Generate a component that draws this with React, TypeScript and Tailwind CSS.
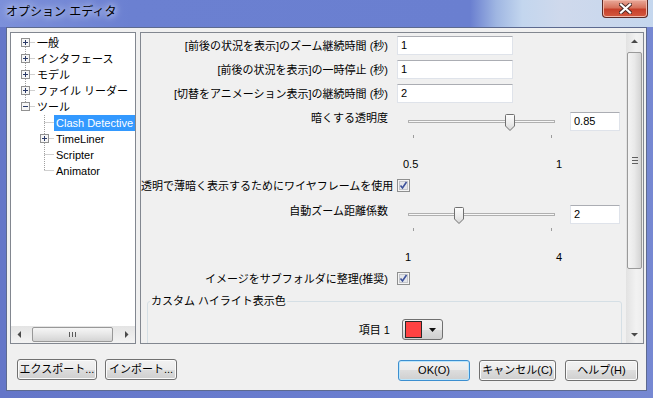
import React from "react";

const FONT = "font-['Liberation_Sans','Noto_Sans_CJK_JP',sans-serif]";

const BTN =
  "h-[21px] rounded-[3px] border bg-[linear-gradient(#f2f2f2_0%,#ebebeb_50%,#dddddd_50%,#cfcfcf_100%)] text-[11px] leading-none text-black flex items-center justify-center whitespace-nowrap";

function Button({ children, w, primary }: { children: React.ReactNode; w: string; primary?: boolean }) {
  return (
    <div
      className={`${BTN} ${w} ${
        primary
          ? "border-[#3c8fd0] shadow-[inset_0_0_0_1px_#bde6fb]"
          : "border-[#707070] shadow-[inset_0_0_0_1px_#fbfbfb]"
      }`}
    >
      {children}
    </div>
  );
}

function TextBox({ value, w }: { value: string; w: string }) {
  return (
    <div
      className={`${w} h-[19px] border border-[#dfe3ea] border-t-[#abadb3] bg-white pl-[3px] text-[11px] leading-[17px] text-black`}
    >
      {value}
    </div>
  );
}

function CheckBox() {
  return (
    <svg width="13" height="13" viewBox="0 0 13 13">
      <rect x="0.5" y="0.5" width="12" height="12" fill="#f4f4f4" stroke="#8e8f8f" />
      <rect x="2.5" y="2.5" width="8" height="8" fill="#e4e6ea" stroke="#c4c6cb" />
      <path d="M3.5 6.5 L5.5 9 L9.5 3" fill="none" stroke="#3c519a" strokeWidth="1.6" />
    </svg>
  );
}

// slider drawn as a small picture: groove, ticks and a down-pointing thumb
function Slider({ value, min, max }: { value: number; min: number; max: number }) {
  const x = 16 + ((value - min) / (max - min)) * 138;
  return (
    <svg width="165" height="28" viewBox="0 0 165 28" className="block">
      <defs>
        <linearGradient id={`th${min}`} x1="0" y1="0" x2="0" y2="1">
          <stop offset="0" stopColor="#fdfdfd" />
          <stop offset="0.55" stopColor="#ececec" />
          <stop offset="1" stopColor="#d6d6d6" />
        </linearGradient>
      </defs>
      <rect x="11.5" y="9.5" width="146" height="2" fill="#f7f7f7" stroke="#b0b0b0" />
      <line x1="16.5" y1="24" x2="16.5" y2="27" stroke="#9c9c9c" />
      <line x1="154.5" y1="24" x2="154.5" y2="27" stroke="#9c9c9c" />
      <g transform={`translate(${Math.round(x) - 5} 3)`}>
        <path
          d="M0.5 1.5 Q0.5 0.5 1.5 0.5 H8.5 Q9.5 0.5 9.5 1.5 V12 L5 16.5 L0.5 12 Z"
          fill={`url(#th${min})`}
          stroke="#707070"
        />
      </g>
    </svg>
  );
}

function Row({ label, children, top, align = "center", h }: { label: string; children: React.ReactNode; top: string; align?: "center" | "start"; h: string }) {
  return (
    <div className={`flex ${top} ${h} ${align === "center" ? "items-center" : "items-start"}`}>
      <div className="w-[247px] shrink-0 whitespace-nowrap text-right text-[11px] leading-[14px] text-black">
        {label}
      </div>
      <div className="ml-[9px] flex items-start">{children}</div>
    </div>
  );
}

type TreeNode = {
  label: string;
  depth: 0 | 1;
  box?: "+" | "-";
  line: "first" | "mid" | "last";
  selected?: boolean;
};

const TREE: TreeNode[] = [
  { label: "一般", depth: 0, box: "+", line: "first" },
  { label: "インタフェース", depth: 0, box: "+", line: "mid" },
  { label: "モデル", depth: 0, box: "+", line: "mid" },
  { label: "ファイル リーダー", depth: 0, box: "+", line: "mid" },
  { label: "ツール", depth: 0, box: "-", line: "last" },
  { label: "Clash Detective", depth: 1, line: "mid", selected: true },
  { label: "TimeLiner", depth: 1, box: "+", line: "mid" },
  { label: "Scripter", depth: 1, line: "mid" },
  { label: "Animator", depth: 1, line: "last" },
];

function TreeLines({ node }: { node: TreeNode }) {
  const w = node.depth === 0 ? 24 : 43;
  const cx = node.depth === 0 ? 14.5 : 33.5;
  const y1 = node.line === "first" ? 8 : 0;
  const y2 = node.line === "last" ? 8 : 16;
  return (
    <svg width={w} height="16" viewBox={`0 0 ${w} 16`} className="shrink-0">
      <line x1={cx} y1={y1} x2={cx} y2={y2} stroke="#a0a0a0" strokeDasharray="1 1" />
      <line x1={cx} y1="7.5" x2={w} y2="7.5" stroke="#a0a0a0" strokeDasharray="1 1" />
      {node.box && (
        <g>
          <rect x={cx - 4} y="3.5" width="8" height="8" fill="#f6f6f6" stroke="#919191" />
          <line x1={cx - 2.5} y1="7.5" x2={cx + 2.5} y2="7.5" stroke="#2b3a67" />
          {node.box === "+" && <line x1={cx} y1="5" x2={cx} y2="10" stroke="#2b3a67" />}
        </g>
      )}
    </svg>
  );
}

function Arrow({ dir }: { dir: "up" | "down" | "left" | "right" }) {
  const d = {
    up: "M1 5 L4.5 1.5 L8 5 Z",
    down: "M1 2 L4.5 5.5 L8 2 Z",
    left: "M5 1 L1.5 4.5 L5 8 Z",
    right: "M2 1 L5.5 4.5 L2 8 Z",
  }[dir];
  const vertical = dir === "up" || dir === "down";
  return (
    <svg width={vertical ? 9 : 7} height={vertical ? 7 : 9}>
      <path d={d} fill="#4a4a4a" />
    </svg>
  );
}

function Tree() {
  return (
    <div className="flex h-[312px] w-[126px] flex-col border border-[#828790] bg-white">
      <div className="flex-1 pt-[2px]">
        {TREE.map((n) => (
          <div key={n.label} className="flex h-[16px] items-center">
            <TreeLines node={n} />
            <span
              className={`whitespace-nowrap px-[2px] text-[11px] leading-[16px] ${
                n.selected ? "bg-[#3399ff] text-white" : "text-black"
              }`}
            >
              {n.label}
            </span>
          </div>
        ))}
      </div>
      <div className="flex h-[17px] bg-[linear-gradient(#e4e4e4,#f3f3f3)]">
        <div className="flex w-[17px] items-center justify-center">
          <Arrow dir="left" />
        </div>
        <div className="flex-1 pt-[1px]">
          <div className="ml-[4px] flex h-[15px] w-[81px] items-center justify-center gap-[2px] rounded-[2px] border border-[#989898] bg-[linear-gradient(#f6f6f6,#e6e6e6_50%,#d4d4d4)]">
            <div className="h-[5px] w-px bg-[#5a5a5a]" />
            <div className="h-[5px] w-px bg-[#5a5a5a]" />
            <div className="h-[5px] w-px bg-[#5a5a5a]" />
          </div>
        </div>
        <div className="flex w-[17px] items-center justify-center">
          <Arrow dir="right" />
        </div>
      </div>
    </div>
  );
}

function VScroll() {
  return (
    <div className="flex w-[17px] flex-col bg-[linear-gradient(90deg,#e2e2e2,#f2f2f2_60%,#ececec)]">
      <div className="flex h-[17px] items-center justify-center">
        <Arrow dir="up" />
      </div>
      <div className="flex-1 pt-[2px]">
        <div className="mx-auto flex h-[217px] w-[15px] flex-col items-center justify-center gap-[2px] rounded-[2px] border border-[#9a9a9a] bg-[linear-gradient(90deg,#f4f4f4,#e9e9e9_50%,#d3d3d3)]">
          <div className="h-px w-[6px] bg-[#5f5f5f]" />
          <div className="h-px w-[6px] bg-[#5f5f5f]" />
          <div className="h-px w-[6px] bg-[#5f5f5f]" />
        </div>
      </div>
      <div className="flex h-[17px] items-center justify-center">
        <Arrow dir="down" />
      </div>
    </div>
  );
}

function Settings() {
  return (
    <div className="flex h-[312px] flex-1 border border-[#828790] bg-[#f0f0f0]">
      <div className="flex flex-1 flex-col overflow-hidden">
        <Row label="[前後の状況を表示]のズーム継続時間 (秒)" top="mt-[3px]" h="h-[19px]">
          <TextBox value="1" w="w-[116px]" />
        </Row>
        <Row label="[前後の状況を表示]の一時停止 (秒)" top="mt-[5px]" h="h-[19px]">
          <TextBox value="1" w="w-[116px]" />
        </Row>
        <Row label="[切替をアニメーション表示]の継続時間 (秒)" top="mt-[5px]" h="h-[19px]">
          <TextBox value="2" w="w-[116px]" />
        </Row>

        <Row label="暗くする透明度" top="mt-[8px]" h="h-[28px]" align="start">
          <Slider value={0.85} min={0.5} max={1} />
          <div className="ml-[8px] mt-[1px]">
            <TextBox value="0.85" w="w-[50px]" />
          </div>
        </Row>
        <div className="ml-[262px] mt-[18px] flex h-[14px] w-[159px] justify-between text-[11px] leading-[14px] text-black">
          <span>0.5</span>
          <span>1</span>
        </div>
        <Row label="透明で薄暗く表示するためにワイヤフレームを使用" top="mt-[8px]" h="h-[13px]">
          <CheckBox />
        </Row>

        <Row label="自動ズーム距離係数" top="mt-[12px]" h="h-[28px]" align="start">
          <Slider value={2} min={1} max={4} />
          <div className="ml-[8px] mt-[1px]">
            <TextBox value="2" w="w-[50px]" />
          </div>
        </Row>
        <div className="ml-[264px] mt-[18px] flex h-[14px] w-[157px] justify-between text-[11px] leading-[14px] text-black">
          <span>1</span>
          <span>4</span>
        </div>
        <Row label="イメージをサブフォルダに整理(推奨)" top="mt-[8px]" h="h-[13px]">
          <CheckBox />
        </Row>

        <fieldset className="ml-[6px] mr-[4px] mt-[9px] shrink-0 rounded-[3px] border border-[#d5dfe5] pb-[40px]">
          <legend className="ml-[2px] px-px text-[11px] leading-[14px] text-black">カスタム ハイライト表示色</legend>
          <div className="mt-[11px] flex items-center">
            <div className="w-[242px] shrink-0 text-right text-[11px] leading-[14px] text-black">項目 1</div>
            <div className="ml-[12px] flex h-[21px] w-[41px] items-center rounded-[3px] border border-[#707070] bg-[linear-gradient(#f2f2f2_0%,#ebebeb_50%,#dddddd_50%,#cfcfcf_100%)] pl-[2px]">
              <div className="h-[17px] w-[17px] border border-[#2a2a2a] bg-[#ff4242]" />
              <svg width="7" height="4" className="ml-[7px]">
                <path d="M0 0 H7 L3.5 4 Z" fill="#111" />
              </svg>
            </div>
          </div>
        </fieldset>
      </div>
      <VScroll />
    </div>
  );
}

export default function App() {
  return (
    <div
      className={`${FONT} flex h-[398px] w-[653px] flex-col overflow-hidden bg-[linear-gradient(90deg,#6476c8,#6a7ed0_60%,#7688d2)]`}
    >
      {/* title bar */}
      <div className="flex h-[27px] shrink-0 items-start justify-between bg-[linear-gradient(90deg,#7c90da_0%,#6b80d1_20%,#6a7fd0_72%,#9fb6e2_76%,#c3d6ee_80%,#cfd9ec_86%,#c5d7ee_100%)] pr-[5px]">
        <div className="ml-[6px] mt-[4px] whitespace-nowrap text-[12px] leading-[16px] text-black [text-shadow:0_0_6px_#dfe6fb,0_0_10px_#dfe6fb]">
          オプション エディタ
        </div>
        <div className="flex h-[18px] w-[46px] items-center justify-center rounded-b-[4px] border border-t-0 border-[#5c2a26] bg-[linear-gradient(#e9a999_0%,#d7735d_45%,#c7402a_55%,#d4593f_100%)] shadow-[inset_0_0_0_1px_#f1b7a8]">
          <svg width="13" height="11" viewBox="0 0 13 11">
            <path d="M2 1.5 L11 9.5 M11 1.5 L2 9.5" stroke="#4a2a26" strokeWidth="4" strokeLinecap="square" />
            <path d="M2 1.5 L11 9.5 M11 1.5 L2 9.5" stroke="#ffffff" strokeWidth="2.2" strokeLinecap="square" />
          </svg>
        </div>
      </div>

      {/* client area */}
      <div className="mx-[6px] mb-[7px] flex flex-1 flex-col border border-[#5d6a8f] bg-[#f0f0f0]">
        <div className="flex gap-[4px] pl-[3px] pr-[2px] pt-[4px]">
          <Tree />
          <Settings />
        </div>
        <div className="mt-[15px] flex justify-between pl-[10px] pr-[8px]">
          <div className="flex gap-[8px]">
            <Button w="w-[80px]">エクスポート...</Button>
            <Button w="w-[72px]">インポート...</Button>
          </div>
          <div className="mt-[1px] flex gap-[9px]">
            <Button w="w-[72px]" primary>
              OK(O)
            </Button>
            <Button w="w-[77px]">キャンセル(C)</Button>
            <Button w="w-[73px]">ヘルプ(H)</Button>
          </div>
        </div>
      </div>
    </div>
  );
}
